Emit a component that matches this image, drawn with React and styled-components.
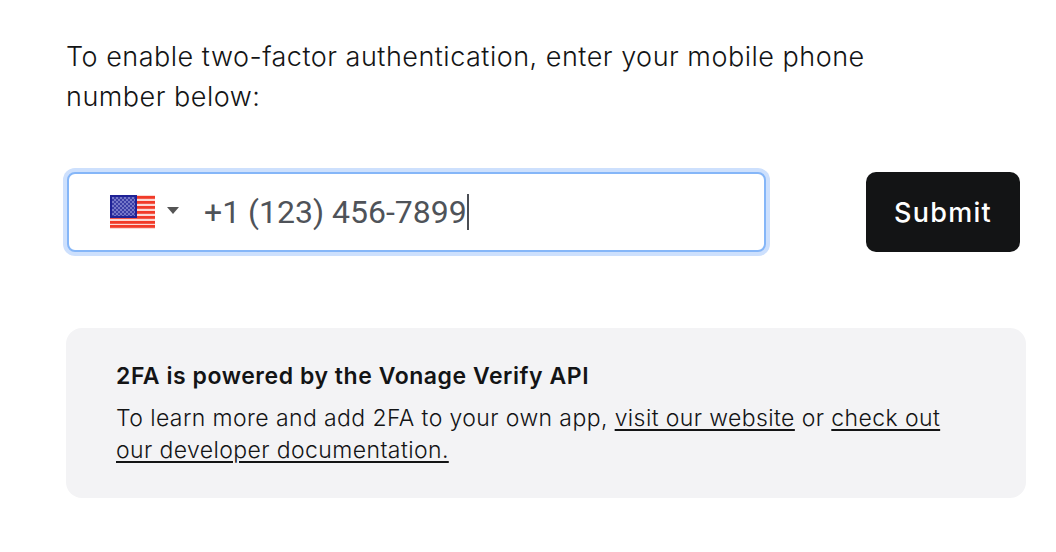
import styled, { createGlobalStyle } from "styled-components";

const GlobalStyle = createGlobalStyle`
  body {
    margin: 0;
    background: #fff;
    color: #131415;
    font-family: Inter, "Liberation Sans", sans-serif;
  }
`;

const Page = styled.main`
  box-sizing: border-box;
  height: 552px;
  overflow: hidden;
  padding: 37px 30px 0 66px;
  width: 1056px;
`;

const Intro = styled.p`
  font-size: 27px;
  font-weight: 300;
  letter-spacing: 0.5px;
  line-height: 40px;
  margin: 0;
  max-width: 820px;
`;

const FormRow = styled.form`
  align-items: center;
  display: flex;
  justify-content: space-between;
  margin-top: 55px;
  padding-right: 6px;
`;

const PhoneField = styled.div`
  align-items: center;
  background: #fff;
  border: 2px solid #85b6f8;
  border-radius: 8px;
  box-shadow: 0 0 0 4px #cde0fd;
  box-sizing: border-box;
  display: flex;
  height: 80px;
  margin-left: 1px;
  padding-left: 41px;
  width: 699px;
`;

const FlagButton = styled.div`
  align-items: center;
  display: flex;
  gap: 12px;
  margin-right: 25px;
`;

const Caret = styled.span`
  border-left: 6px solid transparent;
  border-right: 6px solid transparent;
  border-top: 7px solid #555;
  height: 0;
  margin-top: -4px;
  width: 0;
`;

const PhoneNumber = styled.span`
  border-right: 2px solid #4a4e54;
  color: #4f5359;
  font-family: Roboto, "Liberation Sans", sans-serif;
  font-size: 32px;
  line-height: 36px;
  white-space: nowrap;
`;

const SubmitButton = styled.button`
  background: #131415;
  border: 0;
  border-radius: 10px;
  color: #fff;
  font-family: inherit;
  font-size: 27px;
  font-weight: 500;
  height: 80px;
  letter-spacing: 1.3px;
  padding: 0;
  width: 154px;
`;

const InfoPanel = styled.section`
  background: #f3f3f5;
  border-radius: 16px;
  box-sizing: border-box;
  height: 170px;
  margin-top: 76px;
  padding: 32px 50px 0;
`;

const InfoTitle = styled.h2`
  font-size: 23px;
  font-weight: 600;
  letter-spacing: 0.55px;
  line-height: 32px;
  margin: 0 0 10px;
`;

const InfoText = styled.p`
  font-size: 23px;
  font-weight: 300;
  letter-spacing: 0.4px;
  line-height: 32px;
  margin: 0;
`;

const InfoLink = styled.a`
  color: inherit;
  text-decoration: underline;
  text-decoration-thickness: 2px;
  text-underline-offset: 3px;
`;

const UsFlag = () => (
  <svg width="45" height="34" viewBox="0 0 45 34" aria-hidden="true">
    <defs>
      <pattern id="stars" width="4" height="4" patternUnits="userSpaceOnUse">
        <rect width="4" height="4" fill="#3b3ea6" />
        <rect width="2" height="2" fill="#7577c8" />
        <rect x="2" y="2" width="2" height="2" fill="#7577c8" />
      </pattern>
    </defs>
    <rect width="45" height="34" fill="#fbd9d4" />
    {[1, 6, 11, 16, 21, 26, 30].map((y) => (
      <rect key={y} y={y} width="45" height="2.8" fill="#f13a28" />
    ))}
    <rect width="27" height="23" fill="#1f2296" />
    <rect x="2" y="2" width="23" height="19" fill="url(#stars)" />
  </svg>
);

export default function App() {
  return (
    <>
      <GlobalStyle />
      <Page>
        <Intro>
          To enable two-factor authentication, enter your mobile phone number below:
        </Intro>
        <FormRow>
          <PhoneField>
            <FlagButton>
              <UsFlag />
              <Caret />
            </FlagButton>
            <PhoneNumber>+1 (123) 456-7899</PhoneNumber>
          </PhoneField>
          <SubmitButton type="button">Submit</SubmitButton>
        </FormRow>
        <InfoPanel>
          <InfoTitle>2FA is powered by the Vonage Verify API</InfoTitle>
          <InfoText>
            To learn more and add 2FA to your own app, <InfoLink href="#">visit our website</InfoLink> or{" "}
            <InfoLink href="#">check out our developer documentation.</InfoLink>
          </InfoText>
        </InfoPanel>
      </Page>
    </>
  );
}
